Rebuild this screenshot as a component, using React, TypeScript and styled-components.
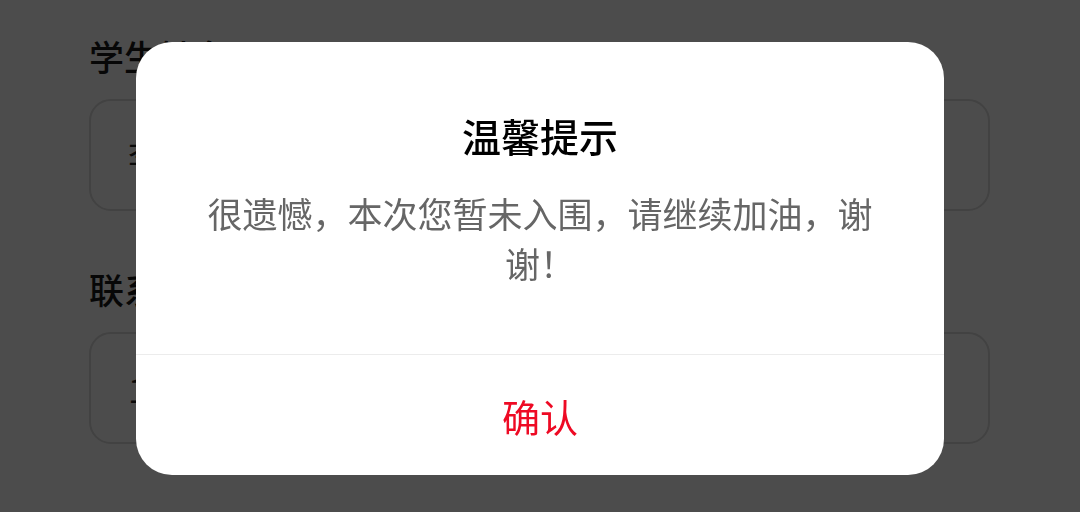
import React from 'react';
import styled, { createGlobalStyle } from 'styled-components';

const GlobalStyle = createGlobalStyle`
  html, body {
    margin: 0;
    padding: 0;
    background: #ffffff;
    font-family: "Noto Sans CJK SC", "Noto Sans", sans-serif;
  }
  * { box-sizing: border-box; }
`;

const Page = styled.div`
  width: 1080px;
  height: 512px;
  padding: 30px 90px 0 89px;
  display: flex;
  flex-direction: column;
  overflow: hidden;
`;

const Field = styled.div`
  display: flex;
  flex-direction: column;
  gap: 17px;
  margin-bottom: 52px;
`;

const Label = styled.div`
  font-size: 35px;
  line-height: 52px;
  font-weight: 500;
  color: #1a1a1a;
`;

const Input = styled.div`
  height: 112px;
  border: 2px solid #dcdcdc;
  border-radius: 22px;
  display: flex;
  align-items: center;
  padding: 0 37px;
  font-size: 34px;
  color: #222;
`;

const Overlay = styled.div`
  position: fixed;
  inset: 0;
  background: rgba(0, 0, 0, 0.7);
  display: flex;
  align-items: flex-start;
  justify-content: center;
  padding-top: 42px;
`;

const Dialog = styled.div`
  width: 808px;
  height: 433px;
  background: #ffffff;
  border-radius: 36px;
  display: flex;
  flex-direction: column;
  overflow: hidden;
`;

const Content = styled.div`
  height: 313px;
  padding: 66px 56px 0;
  display: flex;
  flex-direction: column;
  align-items: center;
  border-bottom: 1px solid #ececec;
`;

const Title = styled.div`
  font-size: 39px;
  line-height: 54px;
  font-weight: 500;
  color: #000;
`;

const Message = styled.div`
  margin-top: 26px;
  font-size: 35px;
  line-height: 50px;
  color: #666666;
  text-align: center;
`;

const Action = styled.button`
  flex: 1;
  border: none;
  background: transparent;
  font-family: inherit;
  font-size: 38px;
  color: #ee0a24;
  cursor: pointer;
  padding: 0;
`;

export default function App() {
  return (
    <>
      <GlobalStyle />
      <Page>
        <Field>
          <Label>学生姓名</Label>
          <Input>李明</Input>
        </Field>
        <Field>
          <Label>联系电话</Label>
          <Input>13800138000</Input>
        </Field>
      </Page>
      <Overlay>
        <Dialog>
          <Content>
            <Title>温馨提示</Title>
            <Message>很遗憾，本次您暂未入围，请继续加油，谢谢！</Message>
          </Content>
          <Action>确认</Action>
        </Dialog>
      </Overlay>
    </>
  );
}
